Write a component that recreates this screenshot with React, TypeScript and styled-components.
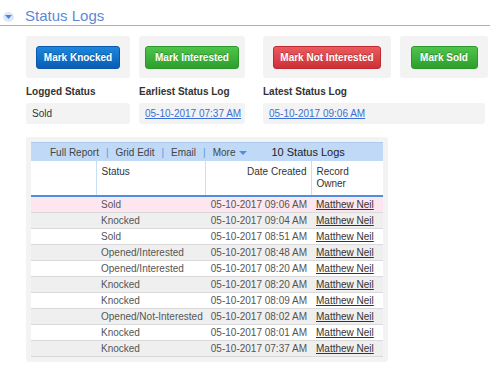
import styled, { createGlobalStyle } from 'styled-components'

const GlobalStyle = createGlobalStyle`
  body {
    margin: 0;
    background: #fff;
    font-family: "Liberation Sans", Arial, sans-serif;
    font-size: 10px;
    color: #333;
  }
`

const Page = styled.div`
  width: 490px;
  padding-top: 6px;
`

const Heading = styled.div`
  display: flex;
  align-items: center;
  height: 19px;
  border-bottom: 1px solid #8fb0e8;
  padding-left: 3px;
`

const Toggle = styled.span`
  width: 11px;
  height: 10px;
  border-radius: 50%;
  background: #dfe7f4;
  display: flex;
  align-items: center;
  justify-content: center;
  margin-right: 11px;
  margin-top: 2px;
`

const Title = styled.h2`
  margin: 0;
  font-size: 15px;
  font-weight: normal;
  color: #5c88d8;
`

const Content = styled.div`
  padding-left: 26px;
`

const Row = styled.div`
  display: flex;
`

const Panel = styled.div<{ $w: number; $ml?: number }>`
  width: ${p => p.$w}px;
  margin-left: ${p => p.$ml ?? 0}px;
  background: #f3f3f3;
  border-radius: 3px;
  display: flex;
  justify-content: center;
  align-items: center;
`

const ActionsRow = styled(Row)`
  margin-top: 10px;
  height: 42px;
`

const colors = {
  blue: ['#1d86dd', '#0a5cb3', '#0858ad'],
  green: ['#4fc44a', '#2c9f2c', '#2a992a'],
  red: ['#ec5a5e', '#cc3137', '#c02a30'],
}

const ActionButton = styled.button<{ $tone: keyof typeof colors; $w: number }>`
  width: ${p => p.$w}px;
  height: 23px;
  border: 1px solid ${p => colors[p.$tone][2]};
  border-radius: 3px;
  background: linear-gradient(${p => colors[p.$tone][0]}, ${p => colors[p.$tone][1]});
  color: #fff;
  font-family: "Liberation Sans", Arial, sans-serif;
  font-size: 10px;
  font-weight: bold;
  text-shadow: 0 -1px 0 rgba(0, 0, 0, 0.25);
  padding: 0;
`

const LabelRow = styled(Row)`
  margin-top: 6px;
`

const Field = styled.div<{ $w: number; $ml?: number }>`
  width: ${p => p.$w}px;
  margin-left: ${p => p.$ml ?? 0}px;
`

const FieldLabel = styled.div`
  font-weight: bold;
  color: #333;
  height: 15px;
  line-height: 15px;
`

const FieldValue = styled.div`
  margin-top: 4px;
  height: 21px;
  line-height: 21px;
  background: #f3f3f3;
  border-radius: 3px;
  padding-left: 6px;
  white-space: nowrap;
`

const DateLink = styled.a`
  color: #3b6fd6;
  text-decoration: underline;
`

const TablePanel = styled.div`
  margin-top: 13px;
  width: 352px;
  padding: 5px;
  background: #f3f3f3;
  border-radius: 3px;
`

const Toolbar = styled.div`
  height: 18px;
  background: #bfd9f6;
  border-top: 1px solid #a9c9ee;
  display: flex;
  align-items: center;
  padding-left: 19px;
  font-size: 10px;
  color: #444;
  white-space: nowrap;
`

const Sep = styled.span`
  color: #5b9ae0;
  margin: 0 7px;
`

const Caret = styled.span`
  display: inline-block;
  width: 0;
  height: 0;
  border-left: 4px solid transparent;
  border-right: 4px solid transparent;
  border-top: 4px solid #4a90e0;
  margin-left: 4px;
  margin-top: 2px;
`

const Count = styled.span`
  margin-left: 24px;
  font-size: 11px;
  color: #222;
`

const Table = styled.table`
  width: 352px;
  border-collapse: collapse;
  table-layout: fixed;
  font-size: 10px;
`

const Th = styled.th<{ $right?: boolean }>`
  background: #fff;
  font-weight: normal;
  color: #333;
  text-align: ${p => (p.$right ? 'right' : 'left')};
  vertical-align: top;
  height: 29px;
  padding: 5px 4px 0 5px;
  line-height: 12px;
  border-left: 1px solid #c9def5;
  border-bottom: 2px solid #4a90e2;
  &:first-child {
    border-left: none;
  }
`

const Tr = styled.tr<{ $bg: string }>`
  background: ${p => p.$bg};
`

const Td = styled.td<{ $right?: boolean }>`
  height: 15px;
  padding: 0 4px 0 5px;
  line-height: 15px;
  color: #555;
  border-bottom: 1px solid #d9d9d9;
  text-align: ${p => (p.$right ? 'right' : 'left')};
  white-space: nowrap;
`

const Owner = styled.a`
  color: #333;
  text-decoration: underline;
`

const logs = [
  ['Sold', '05-10-2017 09:06 AM'],
  ['Knocked', '05-10-2017 09:04 AM'],
  ['Sold', '05-10-2017 08:51 AM'],
  ['Opened/Interested', '05-10-2017 08:48 AM'],
  ['Opened/Interested', '05-10-2017 08:20 AM'],
  ['Knocked', '05-10-2017 08:20 AM'],
  ['Knocked', '05-10-2017 08:09 AM'],
  ['Opened/Not-Interested', '05-10-2017 08:02 AM'],
  ['Knocked', '05-10-2017 08:01 AM'],
  ['Knocked', '05-10-2017 07:37 AM'],
]

function App() {
  return (
    <Page>
      <GlobalStyle />
      <Heading>
        <Toggle>
          <svg width="7" height="4" viewBox="0 0 7 4">
            <path d="M0 0h7L3.5 4z" fill="#4a86d8" />
          </svg>
        </Toggle>
        <Title>Status Logs</Title>
      </Heading>

      <Content>
        <ActionsRow>
          <Panel $w={104}>
            <ActionButton $tone="blue" $w={84}>Mark Knocked</ActionButton>
          </Panel>
          <Panel $w={106} $ml={9}>
            <ActionButton $tone="green" $w={94}>Mark Interested</ActionButton>
          </Panel>
          <Panel $w={128} $ml={18}>
            <ActionButton $tone="red" $w={108}>Mark Not Interested</ActionButton>
          </Panel>
          <Panel $w={88} $ml={9}>
            <ActionButton $tone="green" $w={67}>Mark Sold</ActionButton>
          </Panel>
        </ActionsRow>

        <LabelRow>
          <Field $w={104}>
            <FieldLabel>Logged Status</FieldLabel>
            <FieldValue>Sold</FieldValue>
          </Field>
          <Field $w={106} $ml={9}>
            <FieldLabel>Earliest Status Log</FieldLabel>
            <FieldValue>
              <DateLink href="#">05-10-2017 07:37 AM</DateLink>
            </FieldValue>
          </Field>
          <Field $w={222} $ml={18}>
            <FieldLabel>Latest Status Log</FieldLabel>
            <FieldValue>
              <DateLink href="#">05-10-2017 09:06 AM</DateLink>
            </FieldValue>
          </Field>
        </LabelRow>

        <TablePanel>
          <Toolbar>
            Full Report<Sep>|</Sep>Grid Edit<Sep>|</Sep>Email<Sep>|</Sep>More<Caret />
            <Count>10 Status Logs</Count>
          </Toolbar>
          <Table>
            <colgroup>
              <col style={{ width: 65 }} />
              <col style={{ width: 109 }} />
              <col style={{ width: 106 }} />
              <col style={{ width: 72 }} />
            </colgroup>
            <thead>
              <tr>
                <Th />
                <Th>Status</Th>
                <Th $right>Date Created</Th>
                <Th>Record Owner</Th>
              </tr>
            </thead>
            <tbody>
              {logs.map(([status, date], i) => (
                <Tr key={i} $bg={i === 0 ? '#fde6ef' : i % 2 ? '#efefef' : '#fff'}>
                  <Td />
                  <Td>{status}</Td>
                  <Td $right>{date}</Td>
                  <Td>
                    <Owner href="#">Matthew Neil</Owner>
                  </Td>
                </Tr>
              ))}
            </tbody>
          </Table>
        </TablePanel>
      </Content>
    </Page>
  )
}

export default App
